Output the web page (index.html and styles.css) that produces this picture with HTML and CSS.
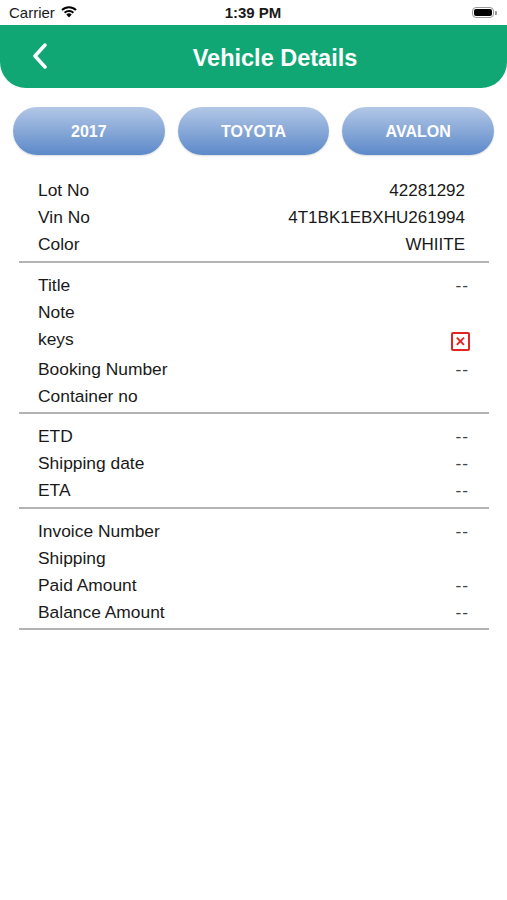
FILE: index.html
```html
<!DOCTYPE html>
<html lang="en">
<head>
  <meta charset="UTF-8">
  <title>Vehicle Details</title>
  <link rel="stylesheet" href="styles.css">
</head>
<body>

  <div class="status-bar">
    <div class="carrier">
      Carrier
      <svg class="wifi" width="18" height="13" viewBox="0 0 18 13">
        <path d="M9 12.5 L6.3 9.6 A4 4 0 0 1 11.7 9.6 Z" fill="#000"/>
        <path d="M4.6 7.8 A6.5 6.5 0 0 1 13.4 7.8" stroke="#000" stroke-width="2" fill="none"/>
        <path d="M2 5 A10 10 0 0 1 16 5" stroke="#000" stroke-width="2" fill="none"/>
      </svg>
    </div>
    <div class="time">1:39 PM</div>
    <div class="battery">
      <span class="battery-body"><span class="battery-level"></span></span>
      <span class="battery-cap"></span>
    </div>
  </div>

  <header class="nav">
    <svg class="back" width="16" height="26" viewBox="0 0 16 26">
      <path d="M13 2 L3 13 L13 24" stroke="#fff" stroke-width="3.5" fill="none" stroke-linecap="round" stroke-linejoin="round"/>
    </svg>
    <h1>Vehicle Details</h1>
  </header>

  <div class="pills">
    <div class="pill">2017</div>
    <div class="pill">TOYOTA</div>
    <div class="pill">AVALON</div>
  </div>

  <div class="section first">
    <div class="row"><span>Lot No</span><span class="val">42281292</span></div>
    <div class="row"><span>Vin No</span><span class="val">4T1BK1EBXHU261994</span></div>
    <div class="row"><span>Color</span><span class="val">WHIITE</span></div>
  </div>

  <div class="section">
    <div class="row"><span>Title</span><span class="dash">--</span></div>
    <div class="row"><span>Note</span><span class="dash"></span></div>
    <div class="row tall"><span>keys</span><span class="nokey">&#x2715;</span></div>
    <div class="row"><span>Booking Number</span><span class="dash">--</span></div>
    <div class="row"><span>Container no</span><span class="dash"></span></div>
  </div>

  <div class="section">
    <div class="row"><span>ETD</span><span class="dash">--</span></div>
    <div class="row"><span>Shipping date</span><span class="dash">--</span></div>
    <div class="row"><span>ETA</span><span class="dash">--</span></div>
  </div>

  <div class="section">
    <div class="row"><span>Invoice Number</span><span class="dash">--</span></div>
    <div class="row"><span>Shipping</span><span class="dash"></span></div>
    <div class="row"><span>Paid Amount</span><span class="dash">--</span></div>
    <div class="row"><span>Balance Amount</span><span class="dash">--</span></div>
  </div>

</body>
</html>
```

FILE: styles.css
```css
body {
  margin: 0;
  font-family: 'Liberation Sans', Arial, sans-serif;
  background-color: #fff;
  color: #1a1a1a;
}

.status-bar {
  height: 25px;
  display: flex;
  align-items: center;
  justify-content: space-between;
  padding: 0 10px 0 9px;
  font-size: 15px;
}

.carrier {
  display: flex;
  align-items: center;
  gap: 5px;
  width: 120px;
}

.wifi {
  margin-top: -2px;
}

.time {
  font-weight: bold;
}

.battery {
  width: 120px;
  display: flex;
  justify-content: flex-end;
  align-items: center;
}

.battery-body {
  width: 22px;
  height: 11px;
  border: 1px solid #999;
  border-radius: 4px;
  padding: 1px;
  box-sizing: border-box;
  display: flex;
}

.battery-level {
  flex: 1;
  background: #000;
  border-radius: 2px;
}

.battery-cap {
  width: 2px;
  height: 4px;
  background: #999;
  border-radius: 0 1px 1px 0;
  margin-left: 1px;
}

.nav {
  background-color: #10a775;
  height: 63px;
  border-radius: 0 0 26px 26px;
  display: flex;
  align-items: center;
  position: relative;
}

.back {
  position: absolute;
  left: 32px;
  top: 18px;
}

.nav h1 {
  flex: 1;
  margin: 0;
  padding: 4px 0 0 43px;
  text-align: center;
  color: #fff;
  font-size: 23.5px;
  font-weight: bold;
}

.pills {
  display: flex;
  gap: 13px;
  padding: 19px 13px 0;
}

.pill {
  flex: 1;
  height: 48px;
  border-radius: 24px;
  background: linear-gradient(#b3c7e6, #5c89c9);
  box-shadow: 0 1px 2px rgba(0, 0, 0, 0.15);
  color: #fff;
  font-weight: bold;
  font-size: 16px;
  padding-top: 1px;
  box-sizing: border-box;
  display: flex;
  align-items: center;
  justify-content: center;
}

.section {
  margin: 0 18px 0 19px;
  padding: 9px 0 2.5px;
  border-bottom: 2px solid #b4b4b4;
}

.section.first {
  margin-top: 22px;
  padding-top: 0;
}

.row {
  height: 27px;
  display: flex;
  align-items: center;
  justify-content: space-between;
  padding: 0 24px 0 19px;
  font-size: 17.4px;
}

.val {
  font-size: 17px;
}

.row.tall {
  height: 30px;
  align-items: flex-start;
  line-height: 27px;
}

.dash {
  color: #444;
  margin-right: -4px;
  letter-spacing: 1px;
}

.nokey {
  width: 15px;
  height: 15px;
  margin-top: 6px;
  border: 2px solid #e02424;
  border-radius: 2px;
  color: #e02424;
  font-size: 13px;
  font-weight: bold;
  line-height: 15px;
  text-align: center;
  margin-right: -5px;
}
```
